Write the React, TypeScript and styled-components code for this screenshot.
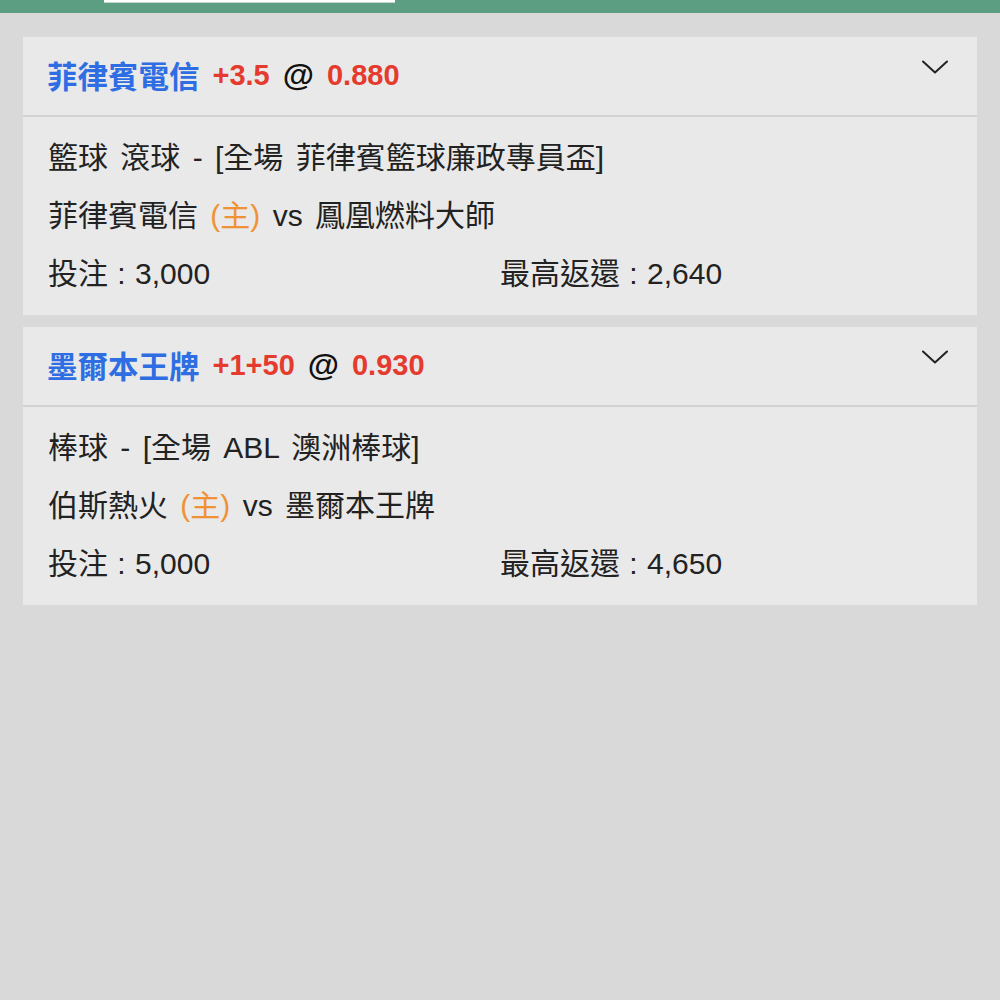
import React from "react";
import styled, { createGlobalStyle } from "styled-components";

const GlobalStyle = createGlobalStyle`
  html, body {
    margin: 0;
    padding: 0;
    background: #d9d9d9;
  }
  body {
    font-family: "Liberation Sans", "Noto Sans CJK TC", sans-serif;
    color: #222;
  }
`;

const Page = styled.div`
  min-height: 1000px;
  background: #d9d9d9;
  display: flex;
  flex-direction: column;
`;

const TopBar = styled.div`
  height: 13px;
  background: #5b9e82;
  display: flex;
  align-items: flex-start;
  padding-left: 104px;
`;

const SearchEdge = styled.div`
  width: 291px;
  height: 2px;
  background: #ffffff;
  border-bottom: 1px solid #c9d6cf;
`;

const List = styled.div`
  display: flex;
  flex-direction: column;
  gap: 12px;
  padding: 24px 23px 0;
`;

const Card = styled.div`
  background: #e9e9e9;
  display: flex;
  flex-direction: column;
`;

const Header = styled.div`
  height: 78px;
  border-bottom: 2px solid #d2d2d2;
  display: flex;
  align-items: flex-start;
  justify-content: space-between;
  padding: 0 29px 0 24px;
`;

const Title = styled.div`
  height: 76px;
  display: flex;
  align-items: center;
  gap: 13px;
  font-size: 29px;
  font-weight: 700;
  white-space: nowrap;
`;

const Team = styled.span`
  color: #2f6ee2;
  font-size: 30.5px;
`;

const Red = styled.span`
  color: #e43b2e;
`;

const At = styled.span`
  color: #111;
  font-size: 32px;
`;

const Chevron = styled.svg`
  margin-top: 23px;
  width: 26px;
  height: 14px;
  flex: none;
`;

const Body = styled.div`
  padding: 12px 25px 12px;
  font-size: 30px;
  line-height: 58px;
  color: #222;
`;

const Line = styled.div`
  white-space: nowrap;
  word-spacing: 4px;
`;

const Home = styled.span`
  color: #ef9236;
`;

const Stats = styled.div`
  display: grid;
  grid-template-columns: 1fr 1fr;
  white-space: nowrap;
  word-spacing: 1px;
`;

type Bet = {
  team: string;
  line: string;
  odds: string;
  league: string;
  home: string;
  away: string;
  stake: string;
  ret: string;
};

const bets: Bet[] = [
  {
    team: "菲律賓電信",
    line: "+3.5",
    odds: "0.880",
    league: "籃球 滾球 - [全場 菲律賓籃球廉政專員盃]",
    home: "菲律賓電信",
    away: "鳳凰燃料大師",
    stake: "3,000",
    ret: "2,640",
  },
  {
    team: "墨爾本王牌",
    line: "+1+50",
    odds: "0.930",
    league: "棒球 - [全場 ABL 澳洲棒球]",
    home: "伯斯熱火",
    away: "墨爾本王牌",
    stake: "5,000",
    ret: "4,650",
  },
];

const ChevronIcon = () => (
  <Chevron viewBox="0 0 26 14">
    <path
      d="M1 1.5 L13 12.5 L25 1.5"
      fill="none"
      stroke="#222"
      strokeWidth="2"
      strokeLinecap="round"
      strokeLinejoin="round"
    />
  </Chevron>
);

export default function App() {
  return (
    <Page>
      <GlobalStyle />
      <TopBar>
        <SearchEdge />
      </TopBar>
      <List>
        {bets.map((b) => (
          <Card key={b.team + b.odds}>
            <Header>
              <Title>
                <Team>{b.team}</Team>
                <Red>{b.line}</Red>
                <At>@</At>
                <Red>{b.odds}</Red>
              </Title>
              <ChevronIcon />
            </Header>
            <Body>
              <Line>{b.league}</Line>
              <Line>
                {b.home} <Home>(主)</Home> vs {b.away}
              </Line>
              <Stats>
                <span>投注 : {b.stake}</span>
                <span>最高返還 : {b.ret}</span>
              </Stats>
            </Body>
          </Card>
        ))}
      </List>
    </Page>
  );
}
